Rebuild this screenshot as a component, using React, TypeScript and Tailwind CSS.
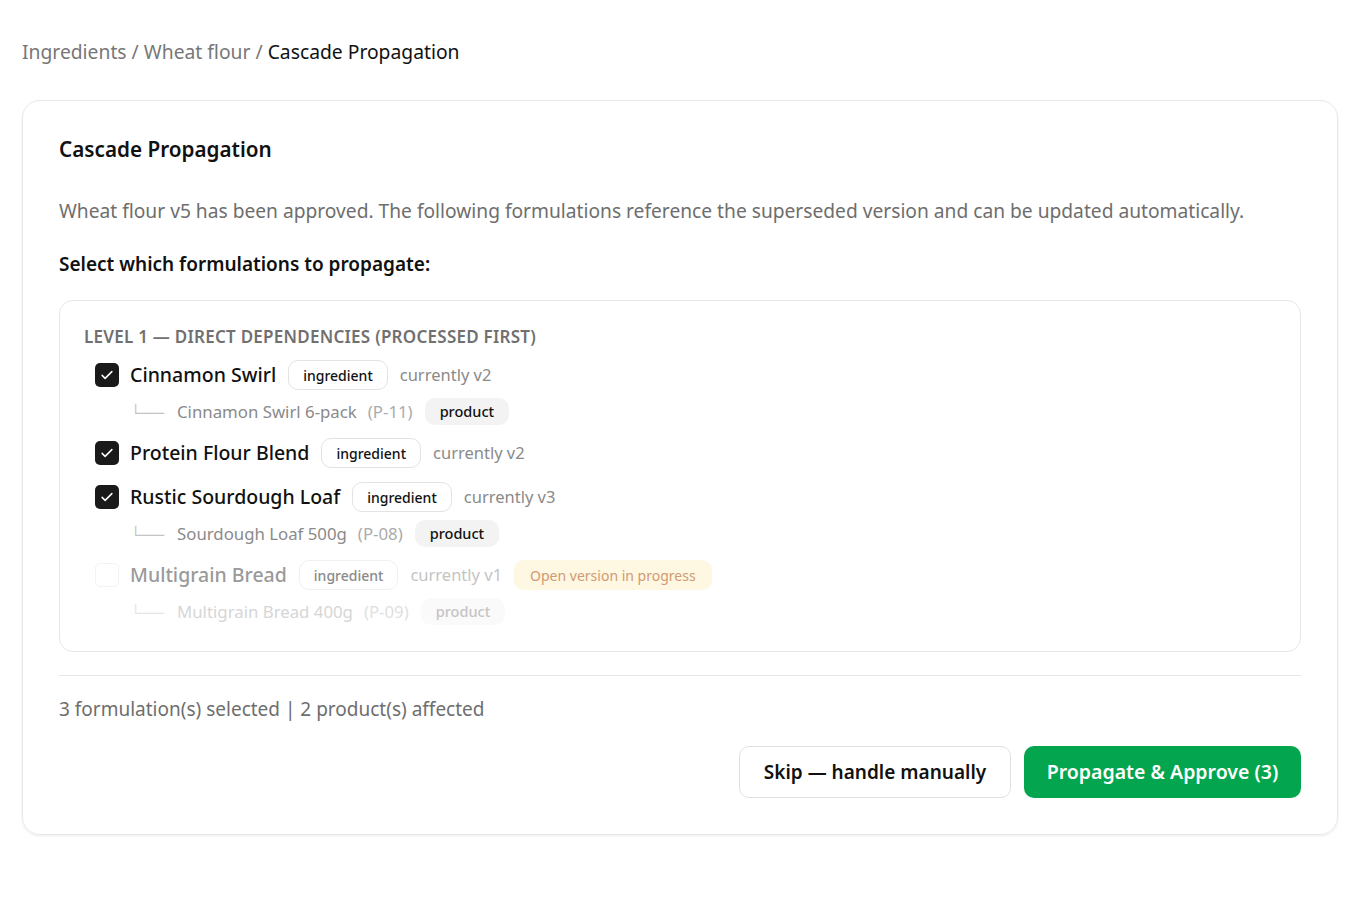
import React from "react";

const Check = () => (
  <svg viewBox="0 0 24 24" className="w-[18px] h-[18px]" fill="none" stroke="white" strokeWidth={2} strokeLinecap="round" strokeLinejoin="round">
    <path d="M5.5 12.5l4 4L18.5 7.5" />
  </svg>
);

function Checkbox({ checked, disabled }: { checked: boolean; disabled?: boolean }) {
  if (checked)
    return (
      <div className="w-[24px] h-[24px] rounded-[5px] bg-[#1a1a1a] flex items-center justify-center shrink-0">
        <Check />
      </div>
    );
  return <div className={`w-[24px] h-[24px] rounded-[5px] border shrink-0 ${disabled ? "border-[#f3f3f3]" : "border-[#ccc]"}`} />;
}

type Item = {
  name: string;
  version: string;
  checked: boolean;
  disabled?: boolean;
  child?: { name: string; code: string };
};

const items: Item[] = [
  { name: "Cinnamon Swirl", version: "currently v2", checked: true, child: { name: "Cinnamon Swirl 6-pack", code: "(P-11)" } },
  { name: "Protein Flour Blend", version: "currently v2", checked: true },
  { name: "Rustic Sourdough Loaf", version: "currently v3", checked: true, child: { name: "Sourdough Loaf 500g", code: "(P-08)" } },
  { name: "Multigrain Bread", version: "currently v1", checked: false, disabled: true, child: { name: "Multigrain Bread 400g", code: "(P-09)" } },
];

function Row({ item }: { item: Item }) {
  const d = item.disabled;
  return (
    <div className="flex flex-col">
      <div className="flex items-center h-[32px] pl-[11px]">
        <Checkbox checked={item.checked} disabled={d} />
        <span className={`ml-[11px] text-[19.5px] font-medium ${d ? "text-[#9a9a9a]" : "text-[#111]"}`}>{item.name}</span>
        <span className={`ml-[12px] h-[30px] px-[14px] flex items-center rounded-[10px] border text-[14px] font-medium ${d ? "border-[#f0f0f0] text-[#8a8a8a]" : "border-[#e3e3e3] text-[#111]"}`}>
          ingredient
        </span>
        <span className={`ml-[12px] text-[16.5px] ${d ? "text-[#c4c4c4]" : "text-[#8a8a8a]"}`}>{item.version}</span>
        {d && (
          <span className="ml-[12px] h-[30px] px-[16px] flex items-center rounded-[10px] bg-[#fef7e2] text-[14px] text-[#d09a74]">
            Open version in progress
          </span>
        )}
      </div>
      {item.child && (
        <div className="flex items-center h-[27px] mt-[7px] pl-[46px]">
          <span className={`text-[16px] leading-none ${d ? "text-[#e6e6e6]" : "text-[#c4c4c4]"}`}>└──</span>
          <span className={`ml-[13px] text-[16.8px] ${d ? "text-[#d6d6d6]" : "text-[#8a8a8a]"}`}>{item.child.name}</span>
          <span className={`ml-[11px] text-[16.8px] ${d ? "text-[#e0e0e0]" : "text-[#ababab]"}`}>{item.child.code}</span>
          <span className={`ml-[12px] h-[27px] px-[15px] flex items-center rounded-[10px] text-[14.5px] font-medium ${d ? "bg-[#fafafa] text-[#c4c4c4]" : "bg-[#f3f3f3] text-[#111]"}`}>
            product
          </span>
        </div>
      )}
    </div>
  );
}

export default function App() {
  return (
    <div className="min-h-[901px] bg-white px-[22px] pt-[38px]" style={{ fontFamily: '"Noto Sans", "Open Sans", sans-serif' }}>
      <div className="text-[19.3px] leading-[28px] text-[#777]">
        Ingredients / Wheat flour / <span className="text-[#111]">Cascade Propagation</span>
      </div>
      <div className="mt-[34px] rounded-[18px] border border-[#e8e8e8] shadow-[0_1px_3px_rgba(0,0,0,0.08)] px-[36px] pt-[35px] pb-[36px]">
        <div className="text-[20.7px] leading-[26px] font-semibold text-[#111]">Cascade Propagation</div>
        <div className="mt-[35px] text-[19.2px] leading-[28px] text-[#6e6e6e]">
          Wheat flour v5 has been approved. The following formulations reference the superseded version and can be updated automatically.
        </div>
        <div className="mt-[25px] text-[19px] leading-[28px] font-semibold text-[#111]">Select which formulations to propagate:</div>
        <div className="mt-[22px] rounded-[14px] border border-[#e6e6e6] px-[24px] pt-[25px] pb-[26px]">
          <div className="text-[17px] leading-[22px] font-semibold uppercase tracking-[0.015em] text-[#707070]">
            Level 1 — Direct dependencies (processed first)
          </div>
          <div className="mt-[11px] flex flex-col gap-[12px]">
            {items.map((it) => (
              <Row key={it.name} item={it} />
            ))}
          </div>
        </div>
        <div className="mt-[23px] border-t border-[#e6e6e6]" />
        <div className="mt-[19px] text-[19px] leading-[28px] text-[#6e6e6e]">3 formulation(s) selected | 2 product(s) affected</div>
        <div className="mt-[23px] flex justify-end gap-[13px]">
          <button className="h-[52px] w-[272px] rounded-[10px] border border-[#e0e0e0] bg-white text-[19px] font-semibold text-[#111]">
            Skip — handle manually
          </button>
          <button className="h-[52px] w-[277px] rounded-[10px] bg-[#03a54e] text-[19.5px] font-semibold text-white">
            Propagate &amp; Approve (3)
          </button>
        </div>
      </div>
    </div>
  );
}
